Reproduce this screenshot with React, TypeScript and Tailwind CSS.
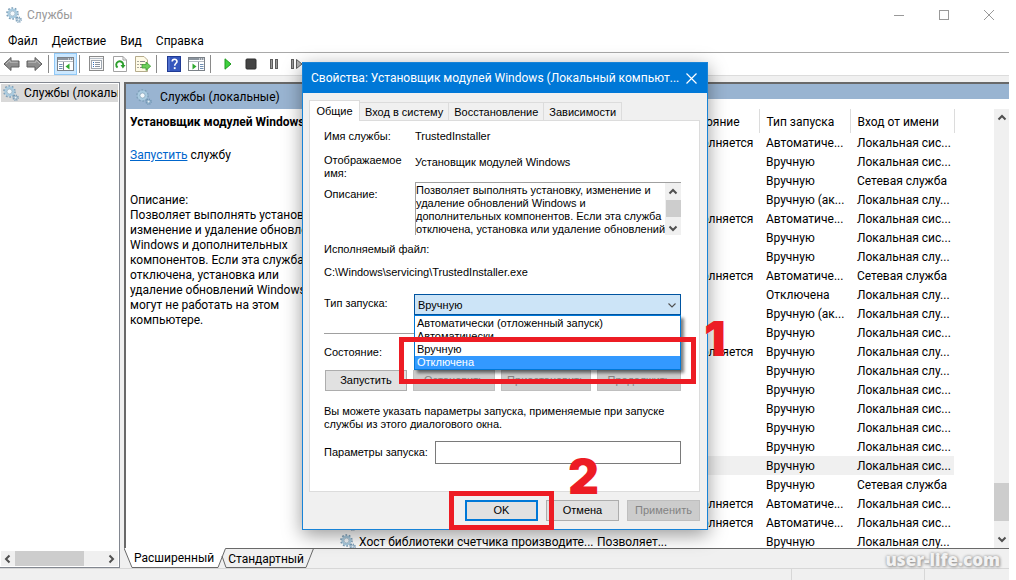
import React from "react";

type Service = {
  name?: string;
  description?: string;
  status?: string;
  startup: string;
  logon: string;
  selected?: boolean;
};

const RUNNING = "Выполняется";
const AUTO = "Автоматиче...";
const MANUAL = "Вручную";
const MANUAL_TRIGGER = "Вручную (ак...";
const LOCAL_SYSTEM = "Локальная сис...";
const LOCAL_SERVICE = "Локальная слу...";
const NETWORK = "Сетевая служба";

const services: Service[] = [
  { status: RUNNING, startup: AUTO, logon: LOCAL_SYSTEM },
  { startup: MANUAL, logon: LOCAL_SYSTEM },
  { startup: MANUAL, logon: NETWORK },
  { startup: MANUAL_TRIGGER, logon: LOCAL_SERVICE },
  { status: RUNNING, startup: AUTO, logon: LOCAL_SYSTEM },
  { startup: MANUAL, logon: LOCAL_SYSTEM },
  { startup: MANUAL, logon: LOCAL_SERVICE },
  { status: RUNNING, startup: AUTO, logon: NETWORK },
  { startup: "Отключена", logon: LOCAL_SERVICE },
  { startup: MANUAL_TRIGGER, logon: LOCAL_SERVICE },
  { startup: MANUAL, logon: LOCAL_SYSTEM },
  { status: RUNNING, startup: MANUAL, logon: LOCAL_SERVICE },
  { startup: MANUAL, logon: LOCAL_SERVICE },
  { startup: MANUAL, logon: LOCAL_SYSTEM },
  { startup: MANUAL, logon: LOCAL_SYSTEM },
  { startup: MANUAL, logon: LOCAL_SYSTEM },
  { startup: MANUAL, logon: LOCAL_SYSTEM },
  { startup: MANUAL, logon: LOCAL_SYSTEM, selected: true },
  { startup: MANUAL, logon: NETWORK },
  { status: RUNNING, startup: AUTO, logon: LOCAL_SYSTEM },
  { status: RUNNING, startup: AUTO, logon: LOCAL_SYSTEM },
  {
    name: "Хост библиотеки счетчика производите...",
    description: "Позволяет...",
    startup: MANUAL,
    logon: LOCAL_SERVICE,
  },
];

const menu = ["Файл", "Действие", "Вид", "Справка"];
const dialogTabs = ["Вход в систему", "Восстановление", "Зависимости"];
const startupTypes = ["Автоматически (отложенный запуск)", "Автоматически", "Вручную", "Отключена"];

const longDescription =
  "Позволяет выполнять установку,\nизменение и удаление обновлений\nWindows и дополнительных\nкомпонентов. Если эта служба\nотключена, установка или\nудаление обновлений Windows\nмогут не работать на этом\nкомпьютере.";

const boxDescription =
  "Позволяет выполнять установку, изменение и\nудаление обновлений Windows и\nдополнительных компонентов. Если эта служба\nотключена, установка или удаление обновлений";

const GearIcon = () => (
  <svg width="16" height="16" viewBox="0 0 16 16" className="shrink-0" aria-hidden="true">
    <circle cx="6.5" cy="6.5" r="5.4" fill="none" stroke="#7d9fb8" strokeWidth="1.8" strokeDasharray="1.7 1.69" />
    <circle cx="6.5" cy="6.5" r="3.9" fill="none" stroke="#a9cbe0" strokeWidth="2.2" />
    <circle cx="6.5" cy="6.5" r="2.5" fill="#f4f9fc" stroke="#7c9db4" strokeWidth="0.6" />
    <circle cx="12.6" cy="12.6" r="2.5" fill="none" stroke="#6d93b0" strokeWidth="1.4" strokeDasharray="1.1 0.86" />
    <circle cx="12.6" cy="12.6" r="1.4" fill="#e8f2f8" stroke="#88abc4" strokeWidth="1" />
  </svg>
);

const ArrowIcon = ({ flip }: { flip?: boolean }) => (
  <svg width="17" height="16" viewBox="0 0 17 16" className={flip ? "-scale-x-100" : ""} aria-hidden="true">
    <path d="M1 8 L8 1.5 V5 H16 V11 H8 V14.5 Z" fill="#8d8d8d" stroke="#5f5f5f" strokeWidth="1" strokeLinejoin="round" />
    <path d="M3 8 L7 4.2 V6.2 H14.8" fill="none" stroke="#bdbdbd" strokeWidth="1" />
  </svg>
);

const TreePaneIcon = ({ mirrored }: { mirrored?: boolean }) => (
  <svg width="17" height="16" viewBox="0 0 17 16" aria-hidden="true">
    <rect x="0.5" y="1.5" width="16" height="13" fill="#fff" stroke="#7b8188" />
    <rect x="1" y="2" width="15" height="2" fill="#8b949e" />
    <path d="M11 3h1M13 3h1M15 3h1" stroke="#fff" />
    <path d="M1 5.5h15" stroke="#b5bcc4" />
    {mirrored ? (
      <>
        <path d="M10.5 6v8" stroke="#7b8188" />
        <path d="M12 8.5h3.5M12 10.5h3.5M12 12.5h3.5" stroke="#6f8fb4" />
        <path d="M4.5 7.5v6l4-3z" fill="#2faa2f" />
      </>
    ) : (
      <>
        <path d="M6.5 6v8" stroke="#7b8188" />
        <path d="M2 8.5h3.5M2 10.5h3.5M2 12.5h3.5" stroke="#6f8fb4" />
        <path d="M12.5 7.5v6l-4-3z" fill="#2faa2f" />
      </>
    )}
  </svg>
);

const PropertiesIcon = () => (
  <svg width="16" height="16" viewBox="0 0 16 16" aria-hidden="true">
    <rect x="0.5" y="0.5" width="14" height="14" fill="#f7f7f7" stroke="#8b8b8b" />
    <path d="M1 2.5h13" stroke="#b9c0c8" />
    <rect x="2.5" y="4.5" width="10" height="8" fill="#fff" stroke="#a0a8b1" />
    <path d="M4 6.5h1M4 8.5h1M4 10.5h1" stroke="#2d6fc4" />
    <path d="M6 6.5h5M6 8.5h5M6 10.5h5" stroke="#8a94a0" />
  </svg>
);

const RefreshIcon = () => (
  <svg width="14" height="16" viewBox="0 0 14 16" aria-hidden="true">
    <path d="M0.5 0.5H10L13.5 4V15.5H0.5Z" fill="#fff" stroke="#a3a3a3" />
    <path d="M10 0.5V4H13.5" fill="none" stroke="#a3a3a3" />
    <path d="M4.6 11.6A3.5 3.5 0 1 1 10.2 9" fill="none" stroke="#2c9e2c" strokeWidth="1.9" />
    <path d="M7.5 9h5l-2.6 3.6z" fill="#2c9e2c" />
  </svg>
);

const ExportIcon = () => (
  <svg width="16" height="16" viewBox="0 0 16 16" aria-hidden="true">
    <path d="M0.5 0.5H9L12.5 4V15.5H0.5Z" fill="#fffbe6" stroke="#b5ab8c" />
    <path d="M2.5 5.5h1M2.5 8.5h1M2.5 11.5h1" stroke="#555" />
    <path d="M5 5.5h5M5 8.5h3M5 11.5h3" stroke="#8a8a8a" />
    <path d="M7 8.5h4V6l4.7 4.2L11 14.4V12H7z" fill="#6ccf5a" stroke="#3d9a33" strokeWidth="0.8" />
  </svg>
);

const HelpIcon = () => (
  <svg width="14" height="16" viewBox="0 0 14 16" aria-hidden="true">
    <rect x="0.5" y="0.5" width="13" height="15" fill="#3557bd" stroke="#1f3a93" />
    <path d="M2 1v14" stroke="#6d8ae0" />
    <path d="M5.2 5.6C5.2 2.6 10 2.6 10 5.4C10 7.4 7.7 7.2 7.7 9.8" fill="none" stroke="#fff" strokeWidth="1.6" />
    <rect x="6.8" y="11.2" width="1.8" height="1.9" fill="#fff" />
  </svg>
);

const PlayIcon = () => (
  <svg width="8" height="12" viewBox="0 0 8 12" aria-hidden="true">
    <path d="M1 0.8V11.2L7 6Z" fill="#3fd13f" stroke="#1f9a1f" />
  </svg>
);

const StopIcon = () => (
  <svg width="12" height="12" viewBox="0 0 12 12" aria-hidden="true">
    <rect x="1" y="1" width="10" height="10" rx="1" fill="#444" stroke="#2e2e2e" />
  </svg>
);

const PauseIcon = () => (
  <svg width="10" height="12" viewBox="0 0 10 12" aria-hidden="true">
    <rect x="1.5" y="1.5" width="2" height="9" fill="#9a9a9a" stroke="#5d5d5d" />
    <rect x="6.5" y="1.5" width="2" height="9" fill="#9a9a9a" stroke="#5d5d5d" />
  </svg>
);

const RestartIcon = () => (
  <svg width="12" height="12" viewBox="0 0 12 12" aria-hidden="true">
    <rect x="0.5" y="1.5" width="2" height="9" fill="#9a9a9a" stroke="#5d5d5d" />
    <path d="M5.5 1.5V10.5L11 6Z" fill="#b0b0b0" stroke="#5d5d5d" />
  </svg>
);

const chevrons = {
  up: "M1.5 6.5L5 3L8.5 6.5",
  down: "M1.5 3.5L5 7L8.5 3.5",
  left: "M6.5 1.5L3 5L6.5 8.5",
  right: "M3.5 1.5L7 5L3.5 8.5",
};

const Chevron = ({ dir, thin }: { dir: keyof typeof chevrons; thin?: boolean }) => (
  <svg width="10" height="10" viewBox="0 0 10 10" className="shrink-0" aria-hidden="true">
    <path d={chevrons[dir]} fill="none" stroke="#505050" strokeWidth={thin ? 1.1 : 2} />
  </svg>
);

const ToolButton = ({ label, active, children }: { label: string; active?: boolean; children: React.ReactNode }) => (
  <button
    aria-label={label}
    className={`flex h-[22px] w-[23px] shrink-0 items-center justify-center ${
      active ? "border border-[#90c8f6] bg-[#cce8ff]" : ""
    }`}
  >
    {children}
  </button>
);

const Separator = () => (
  <div className="w-2 shrink-0 py-[2px] pl-[2px]">
    <div className="h-[18px] w-px bg-[#8a8a8a]" />
  </div>
);

const ServicesTable = () => (
  <table className="w-[614px] shrink-0 table-fixed border-collapse whitespace-nowrap text-left">
    <colgroup>
      <col className="w-[250px]" />
      <col className="w-[82px]" />
      <col className="w-[87px]" />
      <col className="w-[91px]" />
      <col className="w-[104px]" />
    </colgroup>
    <thead>
      <tr className="h-6">
        {["Имя", "Описание", "Состояние", "Тип запуска", "Вход от имени"].map((title) => (
          <th key={title} className="border-r border-[#dcdcdc] pt-[2px] pb-0 pl-[7px] font-normal">
            {title}
          </th>
        ))}
      </tr>
    </thead>
    <tbody>
      {services.map((s, i) => (
        <tr key={i} className={`h-[19px] ${s.selected ? "bg-[#f0f0f0]" : ""}`}>
          <td className="p-0">
            <div className="flex items-center gap-[3px]">
              <GearIcon />
              <span className="pt-[2px]">{s.name}</span>
            </div>
          </td>
          <td className="pt-[2px] pb-0 pl-[7px]">{s.description}</td>
          <td className="pt-[2px] pb-0 pl-[6px]">{s.status}</td>
          <td className="pt-[2px] pb-0 pl-[7px]">{s.startup}</td>
          <td className="pt-[2px] pb-0 pl-[7px]">{s.logon}</td>
        </tr>
      ))}
    </tbody>
  </table>
);

const PropertiesDialog = () => (
  <div
    role="dialog"
    aria-label="Свойства"
    className="absolute top-[62px] left-[302px] w-[406px] border border-[#1883d7] bg-[#f0f0f0] font-['Liberation_Sans',sans-serif] text-[11px] leading-[13px] shadow-[0_5px_18px_rgba(0,0,0,0.4)]"
  >
    <div className="flex h-[30px] items-center justify-between bg-[#0078d7] pr-[10px] pl-2 font-['Roboto',sans-serif] text-[12px] text-white">
      <h2 className="whitespace-nowrap">Свойства: Установщик модулей Windows (Локальный компьют...</h2>
      <button aria-label="Закрыть">
        <svg width="11" height="11" viewBox="0 0 11 11" aria-hidden="true">
          <path d="M0.5 0.5L10.5 10.5M10.5 0.5L0.5 10.5" stroke="#fff" strokeWidth="1.2" />
        </svg>
      </button>
    </div>

    <div className="pt-[7px] pr-[7px] pb-2 pl-[6px]">
      <div className="flex items-end whitespace-nowrap">
        <button className="relative z-10 -mb-px h-[21px] w-[51px] border border-b-0 border-[#dcdcdc] bg-white">
          Общие
        </button>
        {dialogTabs.map((tab) => (
          <button key={tab} className="h-[18px] border border-b-0 border-l-0 border-[#dcdcdc] px-[5px] pt-px">
            {tab}
          </button>
        ))}
      </div>

      <div className="border border-[#dcdcdc] bg-white pt-[9px] pr-[18px] pb-[27px] pl-[14px]">
        <div className="grid grid-cols-[91px_1fr]">
          <span>Имя службы:</span>
          <span>TrustedInstaller</span>
        </div>
        <div className="mt-[11px] grid grid-cols-[91px_1fr]">
          <span>
            Отображаемое
            <br />
            имя:
          </span>
          <span className="pt-[2px]">Установщик модулей Windows</span>
        </div>
        <div className="mt-[2px] grid grid-cols-[91px_1fr]">
          <label htmlFor="description" className="pt-[6px]">
            Описание:
          </label>
          <div className="flex h-[53px] border-t border-l border-[#a0a0a0]">
            <textarea
              id="description"
              readOnly
              value={boxDescription}
              className="min-w-0 flex-1 resize-none overflow-hidden pt-px whitespace-pre"
            />
            <div className="flex w-4 flex-col items-center bg-[#f0f0f0] pt-1 pb-[2px]">
              <Chevron dir="up" />
              <div className="mt-[3px] h-[17px] w-[15px] bg-[#cdcdcd]" />
              <div className="flex-1" />
              <Chevron dir="down" />
            </div>
          </div>
        </div>
        <p className="mt-2">Исполняемый файл:</p>
        <p className="mt-[10px]">C:\Windows\servicing\TrustedInstaller.exe</p>

        <div className="mt-[15px] grid grid-cols-[90px_1fr]">
          <label htmlFor="startup" className="pt-[3px]">
            Тип запуска:
          </label>
          <div className="relative">
            <select
              id="startup"
              defaultValue="Вручную"
              className="block h-[21px] w-full appearance-none border border-[#0054a0] bg-[#cce4f7] px-[3px] pt-px"
            >
              {startupTypes.map((t) => (
                <option key={t}>{t}</option>
              ))}
            </select>
            <span className="pointer-events-none absolute top-[6px] right-1">
              <Chevron dir="down" thin />
            </span>
            <ul
              role="listbox"
              className="absolute top-[21px] left-0 z-10 w-full border border-[#0078d7] bg-white pt-px shadow-[3px_3px_3px_rgba(0,0,0,0.5)]"
            >
              {startupTypes.map((t) => (
                <li
                  key={t}
                  role="option"
                  aria-selected={t === "Отключена"}
                  className={`h-[13px] px-[2px] ${t === "Отключена" ? "bg-[#3399ff] text-white" : ""}`}
                >
                  {t}
                </li>
              ))}
            </ul>
          </div>
        </div>

        <div className="mt-[18px] h-px bg-[#a0a0a0]" />
        <p className="mt-3">Состояние:</p>
        <div className="mt-[11px] flex gap-[6px] pl-px">
          <button className="h-[21px] w-[82px] border border-[#adadad] bg-[#e1e1e1]">Запустить</button>
          <button disabled className="h-[21px] w-[82px] border border-[#bfbfbf] bg-[#cccccc] text-[#838383]">
            Остановить
          </button>
          <button disabled className="h-[21px] w-[90px] border border-[#bfbfbf] bg-[#cccccc] text-[#838383]">
            Приостановить
          </button>
          <button disabled className="h-[21px] flex-1 border border-[#bfbfbf] bg-[#cccccc] text-[#838383]">
            Продолжить
          </button>
        </div>

        <p className="mt-[14px] whitespace-nowrap">
          Вы можете указать параметры запуска, применяемые при запуске
          <br />
          службы из этого диалогового окна.
        </p>
        <div className="mt-[10px] flex items-center">
          <label htmlFor="params" className="w-[111px] whitespace-nowrap">
            Параметры запуска:
          </label>
          <input id="params" className="h-[23px] min-w-0 flex-1 border border-[#7a7a7a] px-1" />
        </div>
      </div>

      <div className="mt-2 flex justify-end gap-2">
        <button className="h-[21px] w-[73px] border-2 border-[#0078d7] bg-[#e1e1e1]">OK</button>
        <button className="h-[21px] w-[73px] border border-[#adadad] bg-[#e1e1e1]">Отмена</button>
        <button disabled className="h-[21px] w-[73px] border border-[#bfbfbf] bg-[#cccccc] text-[#838383]">
          Применить
        </button>
      </div>
    </div>

    {/* Step markers */}
    <div className="absolute top-[274px] left-[96px] z-20 h-[47px] w-[297px] border-[5px] border-[#ed1c24]" />
    <span className="absolute top-[252px] left-[401px] z-20 font-['Inter',sans-serif] text-[48px] leading-[48px] font-black text-[#ed1c24]">
      1
    </span>
    <div className="absolute top-[428px] left-[146px] z-20 h-[39px] w-[105px] border-[5px] border-[#ed1c24]" />
    <span className="absolute top-[390px] left-[265px] z-20 font-['Inter',sans-serif] text-[48px] leading-[48px] font-black text-[#ed1c24]">
      2
    </span>
  </div>
);

const App: React.FC = () => {
  return (
    <div className="relative flex h-screen flex-col overflow-hidden bg-white pr-[7px] font-['Roboto',sans-serif] text-[12px] leading-[15px] text-black">
      {/* Title bar */}
      <header className="flex h-[30px] shrink-0 items-center justify-between pr-[15px] pl-[6px]">
        <div className="flex items-center gap-[5px]">
          <GearIcon />
          <h1 className="text-[#999999]">Службы</h1>
        </div>
        <div className="flex items-center gap-[35px]">
          <button aria-label="Свернуть">
            <svg width="10" height="10" viewBox="0 0 10 10" aria-hidden="true">
              <path d="M0 5.5H10" stroke="#999" />
            </svg>
          </button>
          <button aria-label="Развернуть">
            <svg width="10" height="10" viewBox="0 0 10 10" aria-hidden="true">
              <rect x="0.5" y="0.5" width="9" height="9" fill="none" stroke="#999" />
            </svg>
          </button>
          <button aria-label="Закрыть">
            <svg width="10" height="10" viewBox="0 0 10 10" aria-hidden="true">
              <path d="M0 0L10 10M10 0L0 10" stroke="#999" />
            </svg>
          </button>
        </div>
      </header>

      <nav className="flex h-[23px] shrink-0 items-center gap-[14px] border-b border-[#a9a9a9] pl-2">
        {menu.map((item) => (
          <button key={item}>{item}</button>
        ))}
      </nav>

      {/* Toolbar */}
      <div className="flex h-[23px] shrink-0 border-b border-[#dcdcdc]">
        <ToolButton label="Назад">
          <ArrowIcon />
        </ToolButton>
        <ToolButton label="Вперед">
          <ArrowIcon flip />
        </ToolButton>
        <Separator />
        <ToolButton label="Дерево консоли" active>
          <TreePaneIcon />
        </ToolButton>
        <Separator />
        <ToolButton label="Свойства">
          <PropertiesIcon />
        </ToolButton>
        <ToolButton label="Обновить">
          <RefreshIcon />
        </ToolButton>
        <ToolButton label="Экспорт">
          <ExportIcon />
        </ToolButton>
        <Separator />
        <ToolButton label="Справка">
          <HelpIcon />
        </ToolButton>
        <ToolButton label="Панель действий">
          <TreePaneIcon mirrored />
        </ToolButton>
        <Separator />
        <ToolButton label="Запустить">
          <PlayIcon />
        </ToolButton>
        <ToolButton label="Остановить">
          <StopIcon />
        </ToolButton>
        <ToolButton label="Приостановить">
          <PauseIcon />
        </ToolButton>
        <ToolButton label="Перезапустить">
          <RestartIcon />
        </ToolButton>
      </div>

      <main className="flex min-h-0 flex-1 gap-1 bg-[#f0f0f0] pt-[6px]">
        {/* Console tree */}
        <aside className="flex w-[120px] shrink-0 flex-col border border-l-0 border-[#828790] bg-white p-px">
          <div className="flex h-[18px] items-center gap-[5px] overflow-hidden bg-[#d9d9d9] pl-[2px] whitespace-nowrap">
            <GearIcon />
            <span>Службы (локальные)</span>
          </div>
          <div className="flex-1" />
          <div className="flex h-[15px] items-center justify-between bg-[#f0f0f0] px-[2px]">
            <Chevron dir="left" />
            <div className="mr-5 h-[15px] w-[69px] bg-[#cdcdcd]" />
            <Chevron dir="right" />
          </div>
        </aside>

        <section className="flex min-w-0 flex-1 flex-col">
          <div className="flex min-h-0 flex-1 flex-col border-t-2 border-l-2 border-[#696969] bg-white">
            <div className="h-[15px] shrink-0 bg-[#99b4d1]">
              <div className="flex h-[25px] w-[213px] items-center gap-2 bg-[#99b4d1] pl-[10px]">
                <GearIcon />
                <h2 className="pt-px">Службы (локальные)</h2>
              </div>
            </div>
            <div className="flex min-h-0 flex-1 overflow-hidden pt-[10px]">
              <div className="w-[214px] shrink-0 pt-[6px] pl-1 whitespace-nowrap">
                <h3 className="font-bold">Установщик модулей Windows</h3>
                <p className="mt-[18px]">
                  <a href="#start" className="text-[#0066cc] underline">
                    Запустить
                  </a>{" "}
                  службу
                </p>
                <p className="mt-[30px]">Описание:</p>
                <p className="whitespace-pre-line">{longDescription}</p>
              </div>
              <div className="min-w-0 flex-1 overflow-hidden">
                <ServicesTable />
              </div>
              <div className="flex w-[15px] shrink-0 flex-col items-center bg-[#f0f0f0] py-1">
                <Chevron dir="up" />
                <div className="flex-1" />
                <div className="mb-[13px] h-[38px] w-[15px] bg-[#cdcdcd]" />
                <Chevron dir="down" />
              </div>
            </div>
          </div>

          {/* View tabs */}
          <div className="flex h-[20px] shrink-0">
            <svg width="9" height="20" viewBox="0 0 9 20" aria-hidden="true">
              <path d="M0 0L8 19.5H9V0Z" fill="#fff" />
              <path d="M0 0L8 19.5H9" fill="none" stroke="#696969" />
            </svg>
            <button className="border-b border-[#696969] bg-white px-px pt-[2px]">Расширенный</button>
            <svg width="12" height="20" viewBox="0 0 12 20" aria-hidden="true">
              <path d="M0 0H10L3 19.5H0Z" fill="#fff" />
              <path d="M0 19.5H3L10.5 0.5H12M7 8L11 19.5H12" fill="none" stroke="#696969" />
            </svg>
            <button className="border-y border-[#696969] px-px pt-[2px]">Стандартный</button>
            <svg width="9" height="20" viewBox="0 0 9 20" aria-hidden="true">
              <path d="M0 19.5H1L8.5 0.5M0 0.5H9" fill="none" stroke="#696969" />
            </svg>
            <div className="flex-1 border-t border-[#696969]" />
          </div>
        </section>
      </main>

      {/* Status bar */}
      <footer className="flex h-3 shrink-0 border-t border-[#d7d7d7] bg-[#f0f0f0]">
        <div className="flex-1" />
        <div className="w-[133px] border-l border-[#d7d7d7]" />
        <div className="w-[85px] border-l border-[#d7d7d7]" />
      </footer>

      <PropertiesDialog />

      <span className="absolute right-4 bottom-2 font-['Open_Sans',sans-serif] text-[17px] leading-6 font-extrabold text-[#f2f2f2] [text-shadow:0_0_3px_#999,1px_1px_3px_#999]">
        user-life.com
      </span>
    </div>
  );
};

export default App;
